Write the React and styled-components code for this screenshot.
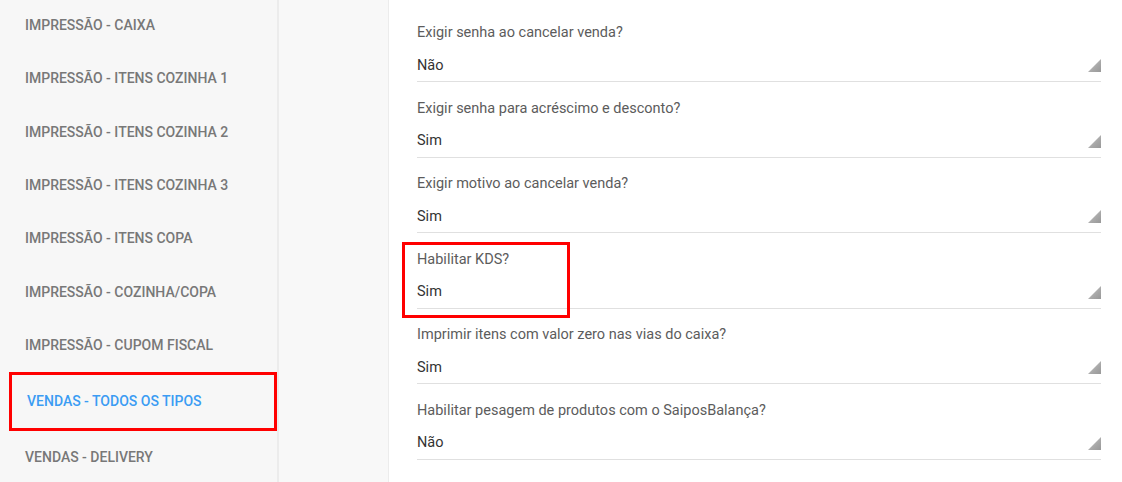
import React from 'react';
import styled, { createGlobalStyle } from 'styled-components';

const GlobalStyle = createGlobalStyle`
  html, body {
    margin: 0;
    padding: 0;
    height: 100%;
    overflow: hidden;
    background: #ffffff;
    font-family: Roboto, 'Liberation Sans', sans-serif;
  }
  #root {
    height: 100%;
  }
`;

const Page = styled.div`
  display: flex;
  height: 482px;
  overflow: hidden;
`;

const Sidebar = styled.nav`
  width: 277px;
  flex-shrink: 0;
  background: #f7f7f7;
  border-right: 2px solid #ececec;
`;

const MenuList = styled.ul`
  list-style: none;
  margin: -1.67px 0 0;
  padding: 0;
`;

const MenuItem = styled.li`
  height: ${(p) => (p.$active ? '59px' : '53.33px')};
  display: flex;
  align-items: center;
  box-sizing: border-box;
  margin-left: ${(p) => (p.$active ? '9px' : '0')};
  padding-left: ${(p) => (p.$active ? '15px' : '25px')};
  border: ${(p) => (p.$active ? '3px solid #ff0000' : 'none')};
  font-size: 14px;
  font-weight: 500;
  text-transform: uppercase;
  color: ${(p) => (p.$active ? '#3b9cf3' : '#787878')};
  white-space: nowrap;
`;

const Gutter = styled.div`
  width: 109px;
  flex-shrink: 0;
  background: #f8f8f8;
  border-right: 1px solid #ececec;
`;

const Main = styled.main`
  flex: 1;
  padding: 6.5px 21px 0 28px;
`;

const Field = styled.div`
  position: relative;
  padding-top: 16.5px;
  padding-bottom: 6px;
  border-bottom: 1px solid #e0e0e0;
`;

const Label = styled.div`
  font-size: 14.5px;
  line-height: 20px;
  color: #5c5c5c;
  margin-bottom: 12px;
`;

const ValueRow = styled.div`
  display: flex;
  align-items: center;
  justify-content: space-between;
  height: 20px;
  font-size: 14.5px;
  color: #333333;
`;

const FieldMark = styled.span`
  position: absolute;
  left: -15px;
  top: 9px;
  width: 168px;
  height: 76px;
  border: 3px solid #ff0000;
  box-sizing: border-box;
  pointer-events: none;
`;

const Arrow = () => (
  <svg width="13" height="13" viewBox="0 0 13 13" style={{ marginBottom: -1 }}>
    <defs>
      <linearGradient id="arrowGrad" x1="0" y1="0" x2="1" y2="1">
        <stop offset="0" stopColor="#d8d8d8" />
        <stop offset="0.6" stopColor="#a8a8a8" />
        <stop offset="1" stopColor="#989898" />
      </linearGradient>
    </defs>
    <polygon points="13,0 13,13 0,13" fill="url(#arrowGrad)" />
  </svg>
);

const menu = [
  'Impressão - Caixa',
  'Impressão - Itens Cozinha 1',
  'Impressão - Itens Cozinha 2',
  'Impressão - Itens Cozinha 3',
  'Impressão - Itens Copa',
  'Impressão - Cozinha/Copa',
  'Impressão - Cupom Fiscal',
  'Vendas - Todos os tipos',
  'Vendas - Delivery',
];

const fields = [
  { label: 'Exigir senha ao cancelar venda?', value: 'Não' },
  { label: 'Exigir senha para acréscimo e desconto?', value: 'Sim' },
  { label: 'Exigir motivo ao cancelar venda?', value: 'Sim' },
  { label: 'Habilitar KDS?', value: 'Sim', marked: true },
  { label: 'Imprimir itens com valor zero nas vias do caixa?', value: 'Sim' },
  { label: 'Habilitar pesagem de produtos com o SaiposBalança?', value: 'Não' },
];

export default function App() {
  return (
    <>
      <GlobalStyle />
      <Page>
        <Sidebar>
          <MenuList>
            {menu.map((item, i) => (
              <MenuItem key={item} $active={i === 7}>
                {item}
              </MenuItem>
            ))}
          </MenuList>
        </Sidebar>
        <Gutter />
        <Main>
          {fields.map((f) => (
            <Field key={f.label}>
              <Label>{f.label}</Label>
              <ValueRow>
                <span>{f.value}</span>
                <Arrow />
              </ValueRow>
              {f.marked && <FieldMark />}
            </Field>
          ))}
        </Main>
      </Page>
    </>
  );
}
